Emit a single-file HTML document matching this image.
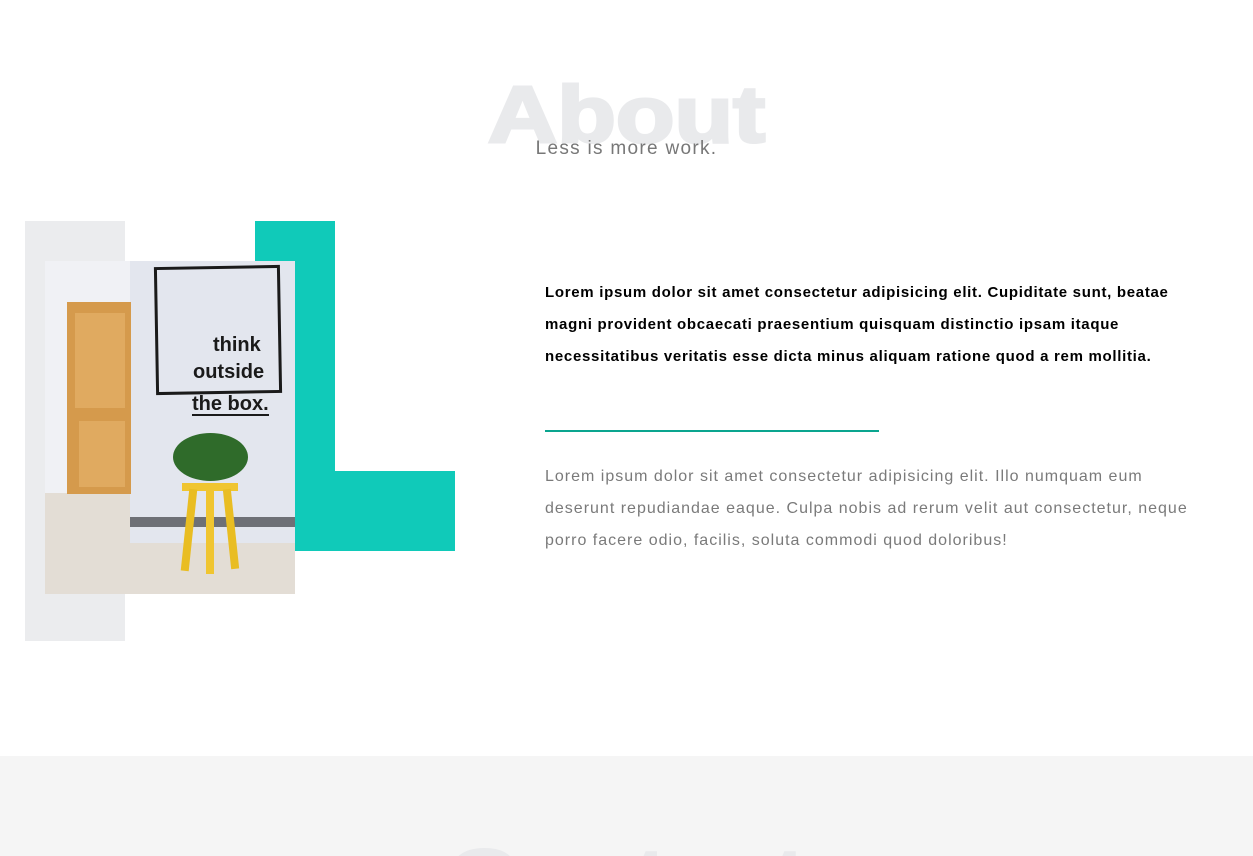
<!DOCTYPE html>
<html><head><style>
body{margin:0;width:1253px;height:856px;overflow:hidden;background:#fff;font-family:"Liberation Sans",sans-serif;position:relative}
.a{position:absolute}
.h{text-align:center;font-size:80px;font-weight:900;color:#e9eaec;line-height:88px;-webkit-text-stroke:3px #e9eaec;transform:scaleX(1.2)}
</style></head><body>
<div class="a h" style="left:0;width:1253px;top:71px">About</div>
<div class="a" style="left:0;width:1253px;top:138px;text-align:center;font-size:19px;color:#777;letter-spacing:1.3px">Less is more work.</div>

<div class="a" style="left:25px;top:221px;width:100px;height:420px;background:#ebecee"></div>
<div class="a" style="left:255px;top:221px;width:80px;height:330px;background:#10cab9"></div>
<div class="a" style="left:295px;top:471px;width:160px;height:80px;background:#10cab9"></div>
<div class="a" style="left:45px;top:261px;width:250px;height:333px;overflow:hidden;background:#e4e7ee">
 <div class="a" style="left:0;top:0;width:85px;height:333px;background:#f0f1f5"></div>
 <div class="a" style="left:0;top:232px;width:250px;height:101px;background:#e3ddd5"></div>
 <div class="a" style="left:85px;top:0;width:165px;height:282px;background:#e3e6ee"></div>
 <div class="a" style="left:85px;top:256px;width:165px;height:10px;background:#6e7076"></div>
 <div class="a" style="left:22px;top:41px;width:64px;height:192px;background:#d59a4c"></div>
 <div class="a" style="left:30px;top:52px;width:50px;height:95px;background:#e0aa60"></div>
 <div class="a" style="left:34px;top:160px;width:46px;height:66px;background:#e0aa60"></div>
 <div class="a" style="left:110px;top:5px;width:120px;height:122px;border:3px solid #1a1a1a;transform:rotate(-1deg)"></div>
 <div class="a" style="left:168px;top:73px;font-size:20px;font-weight:bold;color:#1a1a1a;background:#e3e6ee">think</div>
 <div class="a" style="left:148px;top:100px;font-size:20px;font-weight:bold;color:#1a1a1a;background:#e3e6ee">outside</div>
 <div class="a" style="left:147px;top:133px;font-size:20px;font-weight:bold;color:#1a1a1a;border-bottom:2px solid #1a1a1a;line-height:20px">the box.</div>
 <div class="a" style="left:128px;top:172px;width:75px;height:48px;background:#2f6b2a;border-radius:50%"></div>
 <div class="a" style="left:137px;top:222px;width:56px;height:8px;background:#f0c530"></div>
 <div class="a" style="left:140px;top:228px;width:8px;height:82px;background:#e9bd22;transform:rotate(6deg)"></div>
 <div class="a" style="left:182px;top:228px;width:8px;height:80px;background:#e9bd22;transform:rotate(-6deg)"></div>
 <div class="a" style="left:161px;top:228px;width:8px;height:85px;background:#f0c530"></div>
</div>

<div class="a" style="left:545px;top:277px;width:650px;font-size:15px;font-weight:bold;line-height:32px;color:#000;letter-spacing:0.7px">Lorem ipsum dolor sit amet consectetur adipisicing elit. Cupiditate sunt, beatae magni provident obcaecati praesentium quisquam distinctio ipsam itaque necessitatibus veritatis esse dicta minus aliquam ratione quod a rem mollitia.</div>
<div class="a" style="left:545px;top:430px;width:334px;height:2px;background:#0aa58f"></div>
<div class="a" style="left:545px;top:461px;width:650px;font-size:16px;line-height:32px;color:#7a7a7a;letter-spacing:1px">Lorem ipsum dolor sit amet consectetur adipisicing elit. Illo numquam eum deserunt repudiandae eaque. Culpa nobis ad rerum velit aut consectetur, neque porro facere odio, facilis, soluta commodi quod doloribus!</div>

<div class="a" style="left:0;top:756px;width:1253px;height:100px;background:#f5f5f5;overflow:hidden">
 <div class="a h" style="left:0;width:1253px;top:78px">Contact</div>
</div>
</body></html>
